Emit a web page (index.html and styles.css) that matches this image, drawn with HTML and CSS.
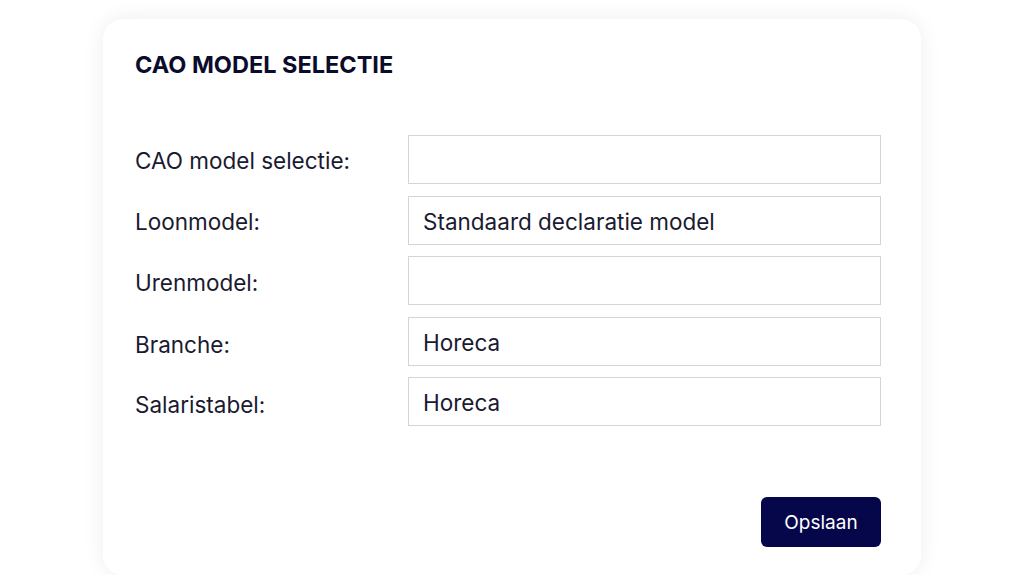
FILE: index.html
```html
<!DOCTYPE html>
<html lang="nl">
<head>
    <meta charset="UTF-8">
    <meta name="viewport" content="width=device-width, initial-scale=1.0">
    <title>CAO model selectie</title>
    <link rel="stylesheet" href="styles.css">
</head>
<body>

    <div class="card">
        <h2 class="title">CAO MODEL SELECTIE</h2>

        <form class="form">
            <label class="label" for="cao">CAO model selectie:</label>
            <input class="field" type="text" id="cao" value="">

            <label class="label" for="loon">Loonmodel:</label>
            <input class="field" type="text" id="loon" value="Standaard declaratie model">

            <label class="label" for="uren">Urenmodel:</label>
            <input class="field" type="text" id="uren" value="">

            <label class="label" for="branche">Branche:</label>
            <input class="field" type="text" id="branche" value="Horeca">

            <label class="label" for="salaris">Salaristabel:</label>
            <input class="field" type="text" id="salaris" value="Horeca">
        </form>

        <div class="actions">
            <button class="btn" type="button">Opslaan</button>
        </div>
    </div>

</body>
</html>
```

FILE: styles.css
```css
body {
    margin: 0;
    font-family: Inter, "Noto Sans", sans-serif;
    background-color: #fff;
    color: #14142b;
}
.card {
    box-sizing: border-box;
    width: 818px;
    height: 556px;
    margin: 19px 0 0 103px;
    padding: 32px 40px 28px 32px;
    background-color: #fff;
    border-radius: 20px;
    box-shadow: 0px 0px 22px rgba(0, 0, 0, 0.07);
    display: flex;
    flex-direction: column;
}
.title {
    margin: 0;
    font-size: 23.5px;
    line-height: 28px;
    font-weight: 700;
    color: #0b0b2b;
}
.form {
    display: grid;
    grid-template-columns: 273px 1fr;
    row-gap: 11.5px;
    align-items: center;
    margin-top: 56px;
}
.label {
    font-size: 22.5px;
    line-height: 26px;
    padding-top: 2px;
    color: #1a1a30;
}
.label:nth-of-type(2),
.label:nth-of-type(3) {
    padding-top: 4px;
}
.label:nth-of-type(4),
.label:nth-of-type(5) {
    padding-top: 7px;
}
.field {
    box-sizing: border-box;
    height: 49px;
    width: 100%;
    padding: 2px 14px 0;
    border: 1.5px solid #d2d4d6;
    border-radius: 0;
    font-family: inherit;
    font-size: 22.5px;
    color: #1a1a30;
    background-color: #fff;
    outline: none;
}
.actions {
    margin-top: auto;
    display: flex;
    justify-content: flex-end;
}
.btn {
    width: 120px;
    height: 50px;
    border: none;
    border-radius: 6px;
    background-color: #06064a;
    color: #fff;
    font-family: inherit;
    font-size: 19px;
    cursor: pointer;
}
```
